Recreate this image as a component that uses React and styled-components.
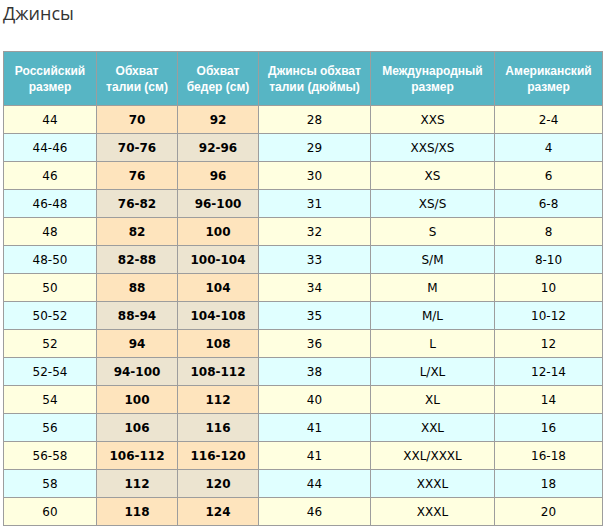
import React from "react";
import styled, { createGlobalStyle } from "styled-components";

const GlobalStyle = createGlobalStyle`
  body {
    margin: 0;
    padding: 0 3px;
    background: #fff;
    font-family: "DejaVu Sans", Verdana, sans-serif;
  }
`;

const Title = styled.h2`
  margin: 0;
  padding-top: 1px;
  height: 50px;
  font-family: "Open Sans", "Liberation Sans", sans-serif;
  font-weight: 400;
  font-size: 18px;
  line-height: 24px;
  color: #333;
`;

const Table = styled.table`
  border-collapse: collapse;
  width: 599px;
  table-layout: fixed;
`;

const HeadCell = styled.th`
  background: #57b5c4;
  color: #fff;
  font-family: "Liberation Sans", Arial, sans-serif;
  font-weight: 700;
  font-size: 12px;
  line-height: 16px;
  height: 53px;
  padding: 0 6px;
  border: 1px solid #9d9d9d;
  text-align: center;
  vertical-align: middle;
`;

const Cell = styled.td`
  background: ${(p) =>
    p.$bold
      ? p.$even
        ? "#ece4d0"
        : "#fee4bd"
      : p.$even
      ? "#e0ffff"
      : "#ffffe0"};
  font-weight: ${(p) => (p.$bold ? 700 : 400)};
  font-size: 12px;
  color: #000;
  height: 27px;
  padding: 0;
  border: 1px solid #9d9d9d;
  text-align: center;
  vertical-align: middle;
`;

const columns = [
  { title: ["Российский", "размер"], width: 93 },
  { title: ["Обхват", "талии (см)"], width: 81 },
  { title: ["Обхват", "бедер (см)"], width: 81 },
  { title: ["Джинсы обхват", "талии (дюймы)"], width: 112 },
  { title: ["Международный", "размер"], width: 124 },
  { title: ["Американский", "размер"], width: 108 },
];

const rows = [
  ["44", "70", "92", "28", "XXS", "2-4"],
  ["44-46", "70-76", "92-96", "29", "XXS/XS", "4"],
  ["46", "76", "96", "30", "XS", "6"],
  ["46-48", "76-82", "96-100", "31", "XS/S", "6-8"],
  ["48", "82", "100", "32", "S", "8"],
  ["48-50", "82-88", "100-104", "33", "S/M", "8-10"],
  ["50", "88", "104", "34", "M", "10"],
  ["50-52", "88-94", "104-108", "35", "M/L", "10-12"],
  ["52", "94", "108", "36", "L", "12"],
  ["52-54", "94-100", "108-112", "38", "L/XL", "12-14"],
  ["54", "100", "112", "40", "XL", "14"],
  ["56", "106", "116", "41", "XXL", "16"],
  ["56-58", "106-112", "116-120", "41", "XXL/XXXL", "16-18"],
  ["58", "112", "120", "44", "XXXL", "18"],
  ["60", "118", "124", "46", "XXXL", "20"],
];

export default function App() {
  return (
    <>
      <GlobalStyle />
      <Title>Джинсы</Title>
      <Table>
        <colgroup>
          {columns.map((c, i) => (
            <col key={i} style={{ width: c.width }} />
          ))}
        </colgroup>
        <thead>
          <tr>
            {columns.map((c, i) => (
              <HeadCell key={i}>
                {c.title[0]}
                <br />
                {c.title[1]}
              </HeadCell>
            ))}
          </tr>
        </thead>
        <tbody>
          {rows.map((row, r) => (
            <tr key={r}>
              {row.map((val, c) => (
                <Cell key={c} $even={r % 2 === 1} $bold={c === 1 || c === 2}>
                  {val}
                </Cell>
              ))}
            </tr>
          ))}
        </tbody>
      </Table>
    </>
  );
}
